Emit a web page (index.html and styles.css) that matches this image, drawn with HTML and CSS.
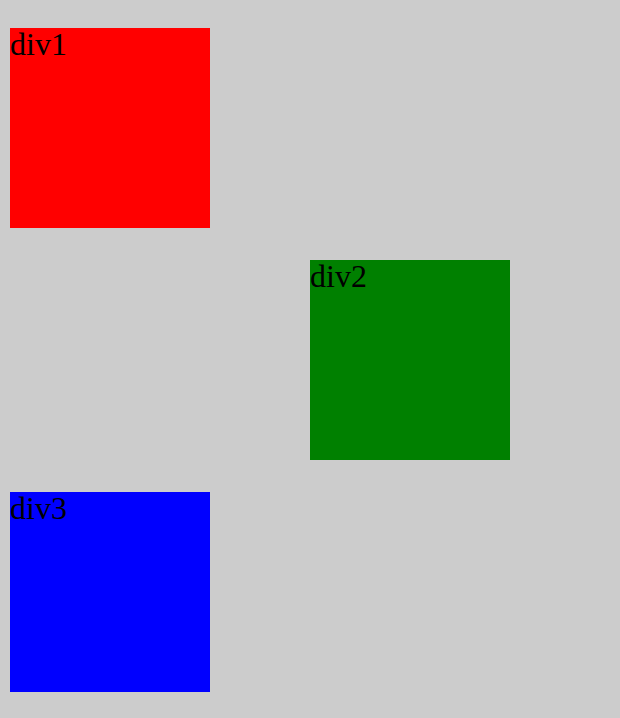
FILE: index.html
```html
<!DOCTYPE html>
<html>
<head>
<meta charset="utf-8">
<link rel="stylesheet" href="styles.css">
</head>
<body>
<div class="stage">
  <div class="box box-red">div1</div>
  <div class="box box-green">div2</div>
  <div class="box box-blue">div3</div>
</div>
</body>
</html>
```
FILE: styles.css
```css
html, body {
  margin: 0;
  padding: 0;
  background: #cccccc;
}
.stage {
  display: flex;
  flex-direction: column;
  gap: 32px;
  padding: 28px 0 0 10px;
  font-family: "Liberation Serif", "Times New Roman", serif;
  font-size: 32px;
  color: #000;
}
.box {
  width: 200px;
  height: 200px;
  line-height: 1;
}
.box-red { background: #ff0000; }
.box-green { background: #008000; margin-left: 300px; }
.box-blue { background: #0000ff; }
```
